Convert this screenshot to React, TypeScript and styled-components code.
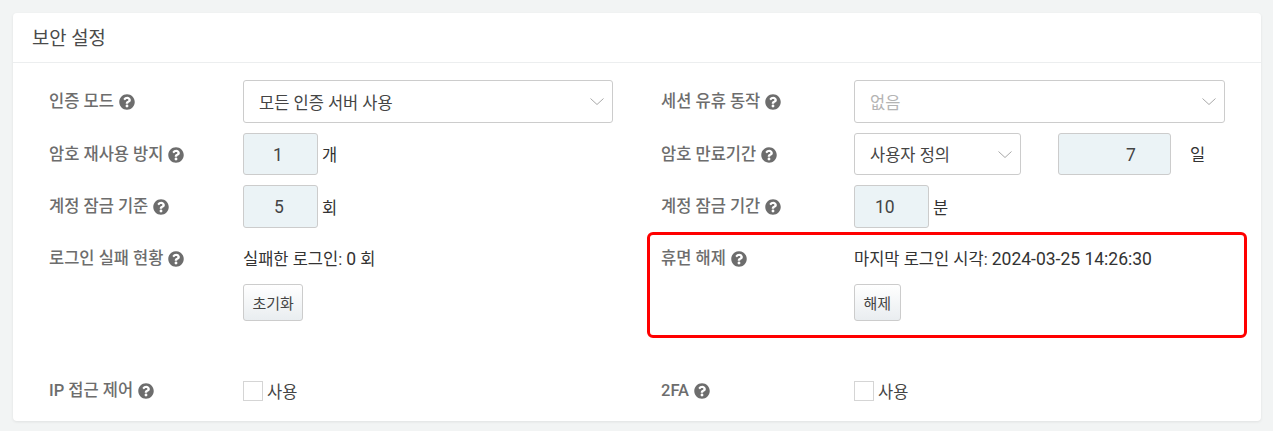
import React from 'react'
import styled, { createGlobalStyle } from 'styled-components'
import { FaQuestionCircle } from 'react-icons/fa'

const GlobalStyle = createGlobalStyle`
  html, body {
    margin: 0;
    padding: 0;
    background: #f2f4f4;
    font-family: Roboto, "Noto Sans CJK KR", sans-serif;
    font-size: 16.5px;
    color: #333;
  }
`

const Page = styled.div`
  padding: 13px 12px 9px 13px;
`

const Card = styled.section`
  background: #fff;
  border-radius: 4px;
  box-shadow: 0 1px 3px rgba(0, 0, 0, 0.08);
  height: 408px;
  box-sizing: border-box;
`

const CardHeader = styled.header`
  height: 50px;
  box-sizing: border-box;
  border-bottom: 1px solid #eceeef;
  padding: 0 19px 2px;
  display: flex;
  align-items: center;
  font-size: 18.8px;
  color: #4a4a4a;
`

const Form = styled.div`
  padding: 17px 0 0 36px;
  display: flex;
  flex-direction: column;
  gap: 10px;
`

const Row = styled.div<{ $height?: number; $top?: number }>`
  display: grid;
  grid-template-columns: 612px 564px;
  height: ${p => (p.$height ? `${p.$height}px` : 'auto')};
  margin-top: ${p => p.$top ?? 0}px;
`

const Field = styled.div<{ $right?: boolean }>`
  position: relative;
  display: grid;
  grid-template-columns: ${p => (p.$right ? '193px 371px' : '194px 370px')};
  align-items: center;
`

const FieldTop = styled(Field)`
  align-items: start;
`

const Label = styled.label<{ $shift?: number }>`
  display: flex;
  align-items: center;
  gap: 5px;
  padding-top: ${p => p.$shift ?? 0}px;
  font-weight: 500;
  font-size: 16.5px;
  color: #6d6d6d;
  line-height: 20px;
`

const Control = styled.div`
  display: flex;
  align-items: center;
  height: 100%;
  min-width: 0;
`

const Stack = styled.div`
  display: flex;
  flex-direction: column;
  align-items: flex-start;
  gap: 14px;
`

const SelectBox = styled.div<{ $width?: number; $disabled?: boolean }>`
  box-sizing: border-box;
  width: ${p => (p.$width ? `${p.$width}px` : '100%')};
  height: 100%;
  display: flex;
  align-items: center;
  justify-content: space-between;
  padding: 0 8px 0 15px;
  background: #fff;
  border: 1px solid #ccc;
  border-radius: 3px;
  color: ${p => (p.$disabled ? '#b4b4b4' : '#444')};
`

const NumberInput = styled.input<{ $width: number; $padLeft: number; $shift?: number }>`
  box-sizing: border-box;
  width: ${p => p.$width}px;
  height: 100%;
  padding: ${p => p.$shift ?? 0}px 0 0 ${p => p.$padLeft}px;
  background: #ebf3f6;
  border: 1px solid #ccc;
  border-radius: 3px;
  font: inherit;
  font-size: 17.5px;
  color: #444;
  outline: none;
`

const Unit = styled.span<{ $left?: number }>`
  margin-left: ${p => p.$left ?? 4}px;
  color: #333;
`

const ValueText = styled.div`
  line-height: 20px;
  color: #333;
  white-space: nowrap;
`

const Num = styled.span`
  font-size: 17.5px;
`

const Button = styled.button`
  box-sizing: border-box;
  height: 37px;
  padding: 0 8.5px;
  background: linear-gradient(#fff, #e9edf0);
  border: 1px solid #ccc;
  border-radius: 3px;
  font: inherit;
  font-size: 15px;
  color: #444;
`

const CheckLabel = styled.label`
  display: flex;
  align-items: center;
  gap: 4px;
  color: #444;
`

const CheckBox = styled.span`
  box-sizing: border-box;
  width: 20px;
  height: 20px;
  background: #fff;
  border: 1px solid #d5d5d5;
`

const Highlight = styled.div`
  position: absolute;
  left: -14px;
  top: -17px;
  right: -22px;
  height: 106px;
  box-sizing: border-box;
  border: 3px solid #ff0000;
  border-radius: 6px;
  pointer-events: none;
`

const Help = () => <FaQuestionCircle size={16} color="#6d6d6d" />

const Chevron = () => (
  <svg width="14" height="7" viewBox="0 0 14 7" fill="none" stroke="#a8a8a8" strokeWidth="1">
    <polyline points="0.5,0.5 7,6.5 13.5,0.5" />
  </svg>
)

const App = () => (
  <>
    <GlobalStyle />
    <Page>
      <Card>
        <CardHeader>보안 설정</CardHeader>
        <Form>
          <Row $height={43}>
            <Field>
              <Label>인증 모드 <Help /></Label>
              <Control>
                <SelectBox>모든 인증 서버 사용<Chevron /></SelectBox>
              </Control>
            </Field>
            <Field $right>
              <Label>세션 유휴 동작 <Help /></Label>
              <Control>
                <SelectBox $disabled>없음<Chevron /></SelectBox>
              </Control>
            </Field>
          </Row>
          <Row $height={42}>
            <Field>
              <Label $shift={2}>암호 재사용 방지 <Help /></Label>
              <Control>
                <NumberInput $width={75} $padLeft={29} $shift={2} value="1" readOnly />
                <Unit>개</Unit>
              </Control>
            </Field>
            <Field $right>
              <Label $shift={2}>암호 만료기간 <Help /></Label>
              <Control>
                <SelectBox $width={167}>사용자 정의<Chevron /></SelectBox>
                <Unit $left={37} />
                <NumberInput $width={113} $padLeft={67} $shift={2} value="7" readOnly />
                <Unit $left={19}>일</Unit>
              </Control>
            </Field>
          </Row>
          <Row $height={43}>
            <Field>
              <Label>계정 잠금 기준 <Help /></Label>
              <Control>
                <NumberInput $width={75} $padLeft={30} value="5" readOnly />
                <Unit>회</Unit>
              </Control>
            </Field>
            <Field $right>
              <Label>계정 잠금 기간 <Help /></Label>
              <Control>
                <NumberInput $width={75} $padLeft={20} value="10" readOnly />
                <Unit>분</Unit>
              </Control>
            </Field>
          </Row>
          <Row $top={11}>
            <FieldTop>
              <Label>로그인 실패 현황 <Help /></Label>
              <Stack>
                <ValueText>실패한 로그인: <Num>0</Num> 회</ValueText>
                <Button>초기화</Button>
              </Stack>
            </FieldTop>
            <FieldTop $right>
              <Label>휴면 해제 <Help /></Label>
              <Stack>
                <ValueText>마지막 로그인 시각: <Num>2024-03-25 14:26:30</Num></ValueText>
                <Button>해제</Button>
              </Stack>
              <Highlight />
            </FieldTop>
          </Row>
          <Row $height={20} $top={48}>
            <Field>
              <Label>IP 접근 제어 <Help /></Label>
              <CheckLabel><CheckBox />사용</CheckLabel>
            </Field>
            <Field $right>
              <Label>2FA <Help /></Label>
              <CheckLabel><CheckBox />사용</CheckLabel>
            </Field>
          </Row>
        </Form>
      </Card>
    </Page>
  </>
)

export default App
